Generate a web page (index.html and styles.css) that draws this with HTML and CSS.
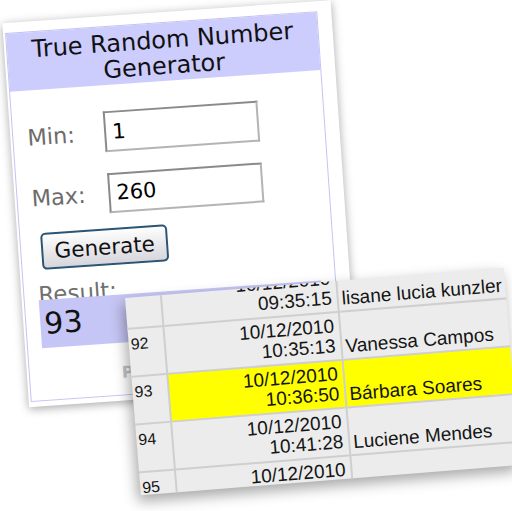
FILE: index.html
```
<!DOCTYPE html>
<html lang="en">
<head>
<meta charset="utf-8">
<title>True Random Number Generator</title>
<link rel="stylesheet" href="styles.css">
</head>
<body>
<section class="widget">
  <div class="rng">
    <h1 class="rng-title">True Random Number<br>Generator</h1>
    <div class="field field-min"><label class="field-label">Min:</label><input class="field-input" value="1"></div>
    <div class="field field-max"><label class="field-label">Max:</label><input class="field-input" value="260"></div>
    <button class="generate">Generate</button>
    <div class="result-label">Result:</div>
    <div class="result">93</div>
    <div class="powered">Powered by RANDOM.ORG</div>
  </div>
</section>
<section class="sheet">
  <table class="log">
    <colgroup><col class="c-idx"><col class="c-when"><col class="c-who"></colgroup>
    <tr><td class="idx"></td><td class="when">10/12/2010<br>09:35:15</td><td class="who">lisane lucia kunzler</td></tr>
    <tr><td class="idx">92</td><td class="when">10/12/2010<br>10:35:13</td><td class="who">Vanessa Campos</td></tr>
    <tr class="hit"><td class="idx">93</td><td class="when">10/12/2010<br>10:36:50</td><td class="who">Bárbara Soares</td></tr>
    <tr><td class="idx">94</td><td class="when">10/12/2010<br>10:41:28</td><td class="who">Luciene Mendes</td></tr>
    <tr><td class="idx">95</td><td class="when">10/12/2010</td><td class="who"></td></tr>
  </table>
</section>
</body>
</html>
```
FILE: styles.css
```
html, body {
  margin: 0;
  padding: 0;
}
body {
  width: 512px;
  height: 511px;
  overflow: hidden;
  position: relative;
  background: #fff;
  font-family: "DejaVu Sans", Verdana, sans-serif;
}

/* left card: the generator widget */
.widget {
  position: absolute;
  left: 3px;
  top: 23px;
  padding: 10px 14px 5px 2px;
  background: #fff;
  transform-origin: 2px 10px;
  transform: rotate(-4deg);
  box-shadow: 0 2px 10px rgba(0, 0, 0, 0.35);
}
.rng {
  width: 311px;
  height: 368px;
  border: 1px solid #c4c4f2;
  display: flex;
  flex-direction: column;
}
.rng-title {
  margin: 0;
  height: 58px;
  box-sizing: border-box;
  padding-top: 4px;
  background: #ccccfd;
  font-weight: normal;
  font-size: 24px;
  line-height: 26px;
  text-align: center;
  color: #111;
}
.field {
  display: flex;
  align-items: center;
  padding-left: 14px;
}
.field-min { margin-top: 26px; }
.field-max { margin-top: 21px; }
.field-label {
  width: 77px;
  font-size: 22.5px;
  color: #6c6c6c;
}
.field-input {
  width: 155px;
  height: 41px;
  box-sizing: border-box;
  margin: 0;
  padding: 0 6px;
  border: 2px solid #b4b4b4;
  border-top-color: #8a8a8a;
  border-left-color: #8a8a8a;
  background: #fff;
  font: 21px "DejaVu Sans", Verdana, sans-serif;
  color: #000;
}
.field-max .field-input { height: 40px; }
.generate {
  align-self: flex-start;
  margin: 15px 0 0 20px;
  width: 127px;
  height: 37px;
  padding: 0;
  border: 2px solid #2c5474;
  border-radius: 5px;
  background: linear-gradient(#fefefe, #d6d6dc);
  font: 21.5px "DejaVu Sans", Verdana, sans-serif;
  color: #111;
}
.result-label {
  margin: 15px 0 -5px 14px;
  font-size: 23px;
  line-height: 20px;
  color: #707070;
}
.result {
  margin: 0 14px;
  height: 48px;
  padding-left: 4px;
  background: #c6c6f6;
  font-size: 30px;
  line-height: 48px;
  color: #111;
}
.powered {
  margin: 20px 0 0 92px;
  font-size: 16px;
  line-height: 20px;
  font-weight: bold;
  color: #c4c4c4;
  white-space: nowrap;
}

/* right card: the draw log */
.sheet {
  position: absolute;
  left: 125px;
  top: 298px;
  width: 380px;
  height: 198px;
  overflow: hidden;
  background: #ececec;
  transform-origin: 0 0;
  transform: rotate(-4.6deg);
  box-shadow: -3px 6px 14px rgba(0, 0, 0, 0.35);
}
.log {
  border-collapse: collapse;
  table-layout: fixed;
  width: 388px;
  margin: -18px 0 0 -2px;
  font-family: "Liberation Sans", Arial, sans-serif;
  color: #151515;
}
.c-idx { width: 37px; }
.c-when { width: 176px; }
.c-who { width: 175px; }
.log tr { height: 48px; }
.log td {
  border: 2px solid #cfcfcf;
  vertical-align: top;
  padding: 0;
  white-space: nowrap;
}
.idx {
  font-size: 16px;
  line-height: 18px;
  padding: 6px 0 0 2px !important;
}
.when {
  font-size: 19px;
  line-height: 20px;
  text-align: right;
  padding: 3px 5px 0 0 !important;
}
.who {
  font-size: 19px;
  line-height: 20px;
  padding: 24px 0 0 3px !important;
}
.hit .when, .hit .who { background: #ffff00; }
```
